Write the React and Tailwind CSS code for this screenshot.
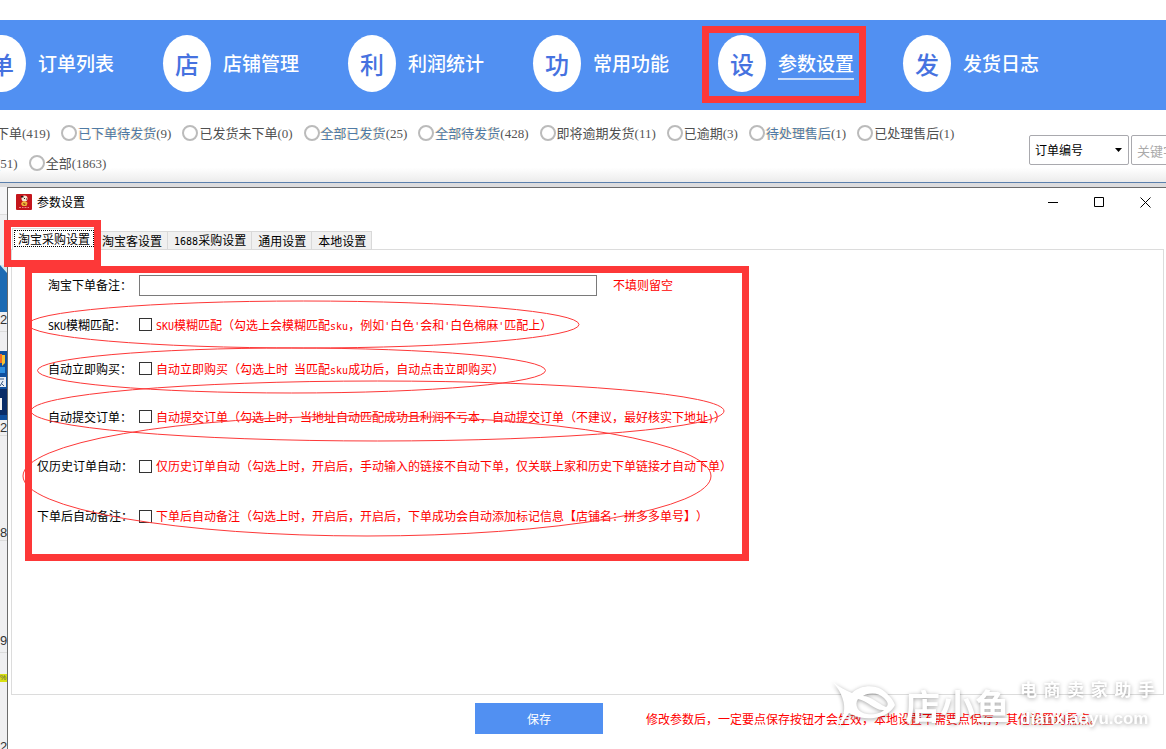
import { useState } from "react";

const NAV_ITEMS = [
  { key: "orders", badge: "单", label: "订单列表" },
  { key: "shops", badge: "店", label: "店铺管理" },
  { key: "profit", badge: "利", label: "利润统计" },
  { key: "tools", badge: "功", label: "常用功能" },
  { key: "settings", badge: "设", label: "参数设置" },
  { key: "logs", badge: "发", label: "发货日志" },
];

const FILTERS = [
  { label: "已下单待发货", count: 9, updated: true },
  { label: "已发货未下单", count: 0 },
  { label: "全部已发货", count: 25, updated: true },
  { label: "全部待发货", count: 428, updated: true },
  { label: "即将逾期发货", count: 11 },
  { label: "已逾期", count: 3 },
  { label: "待处理售后", count: 1, updated: true },
  { label: "已处理售后", count: 1 },
];

const TABS = [
  { key: "taobao", label: "淘宝采购设置" },
  { key: "taoke", label: "淘宝客设置" },
  { key: "1688", prefix: "1688", label: "采购设置" },
  { key: "common", label: "通用设置" },
  { key: "local", label: "本地设置" },
];

// latin letters take half the width of a Chinese character
const Half = ({ children }) => (
  <span className="font-['DejaVu_Sans_Mono',monospace] text-[10px]">{children}</span>
);

const OPTIONS = [
  {
    id: "sku",
    row: "mt-5",
    name: "pl-4",
    label: <><Half>SKU</Half>模糊匹配：</>,
    text: (
      <>
        <Half>SKU</Half>模糊匹配（勾选上会模糊匹配<Half>sku</Half>，例如<Half>'</Half>白色<Half>'</Half>会和
        <Half>'</Half>白色棉麻<Half>'</Half>匹配上）
      </>
    ),
  },
  {
    id: "buy",
    row: "mt-6",
    name: "pl-4",
    label: "自动立即购买：",
    text: <>自动立即购买（勾选上时<Half> </Half>当匹配<Half>sku</Half>成功后，自动点击立即购买）</>,
  },
  {
    id: "submit",
    row: "mt-7",
    name: "pl-4",
    label: "自动提交订单：",
    text: <>自动提交订单（勾选上时，当地址自动匹配成功且利润不亏本，自动提交订单（不建议，最好核实下地址<Half>)</Half>）</>,
  },
  {
    id: "history",
    row: "mt-[29px]",
    name: "pl-[5px]",
    label: "仅历史订单自动：",
    text: "仅历史订单自动（勾选上时，开启后，手动输入的链接不自动下单，仅关联上家和历史下单链接才自动下单）",
  },
  {
    id: "remark",
    row: "mt-[30px]",
    name: "pl-[5px]",
    label: "下单后自动备注：",
    text: "下单后自动备注（勾选上时，开启后，开启后，下单成功会自动添加标记信息【店铺名：拼多多单号】）",
  },
];

function NavBar({ active, onSelect }) {
  return (
    <nav className="h-[90px] bg-[#5190f2] overflow-hidden">
      <div className="flex items-center h-full -ml-[22px] pb-[3px]">
        {NAV_ITEMS.map((item) => (
          <button
            key={item.key}
            type="button"
            onClick={() => onSelect(item.key)}
            className="relative flex items-center gap-3 w-[185px] shrink-0 cursor-pointer"
          >
            <span className="w-12 h-[57px] rounded-[50%] bg-white text-[#4672e0] text-2xl font-medium flex items-center justify-center">
              {item.badge}
            </span>
            <span
              className={
                item.key === active
                  ? "text-white text-[19px] leading-[30px] font-medium border-b-2 border-[#c8dcfb]"
                  : "text-white text-[19px] leading-[30px] font-medium border-b-2 border-transparent"
              }
            >
              {item.label}
            </span>
            {item.key === "settings" && (
              <span className="absolute -left-[16px] -top-[9px] w-[164px] h-[77px] border-[7px] border-[#fd3838]" />
            )}
          </button>
        ))}
      </div>
    </nav>
  );
}

function Count({ value }) {
  return <span className="font-['Liberation_Serif',serif] text-[13px] text-[#555]">({value})</span>;
}

function FilterRadio({ label, count, updated }) {
  return (
    <label className="flex items-center gap-px whitespace-nowrap">
      <input type="radio" name="status" className="appearance-none w-4 h-4 rounded-full border-2 border-[#bbb] bg-white checked:bg-[#5190f2]" />
      <span>
        <span className={updated ? "text-[#4f7ba5] [text-shadow:-1px_0_#fbdcb0]" : "text-[#505050]"}>{label}</span>
        <Count value={count} />
      </span>
    </label>
  );
}

function FilterBar() {
  return (
    <div className="flex items-start h-[72px] text-[13px] text-[#505050] bg-linear-to-b from-white from-80% to-[#ececec]">
      <div className="flex-1 min-w-0 pt-2">
        <div className="flex items-center gap-[11px] h-[30px]">
          <span className="whitespace-nowrap -ml-1">下单<Count value={419} /></span>
          {FILTERS.map((f) => (
            <FilterRadio key={f.label} {...f} />
          ))}
        </div>
        <div className="flex items-center gap-[11px] h-[30px]">
          <span className="-ml-1"><Count value={51} /></span>
          <FilterRadio label="全部" count={1863} />
        </div>
      </div>
      <div className="flex gap-[2px] pt-[25px] -mr-[85px]">
        <div className="relative">
          <select
            aria-label="搜索字段"
            className="appearance-none w-[100px] h-[30px] pl-[5px] border border-[#a9a9ae] rounded-xs bg-white text-xs text-black"
          >
            <option>订单编号</option>
          </select>
          <svg className="absolute right-[7px] top-[13px] w-[7px] h-1 pointer-events-none" viewBox="0 0 7 4">
            <path d="M0 0h7L3.5 4z" fill="#000" />
          </svg>
        </div>
        <input
          aria-label="关键字"
          placeholder="关键字"
          className="w-[120px] h-[30px] px-[5px] border border-[#a9a9ae] rounded-xs bg-white placeholder:text-[#aaa]"
        />
      </div>
    </div>
  );
}

// sliver of the order list that stays visible next to the dialog
function OrderListEdge() {
  return (
    <div className="w-[7px] shrink-0 overflow-hidden bg-[#efeff1] text-[13px] leading-4 text-[#333] font-['Liberation_Sans',sans-serif]">
      <div className="h-7 bg-[#f5f5f7] border-b border-[#ddd]" />
      <svg className="block mt-[50px] w-[7px] h-[47px]" viewBox="0 0 7 47">
        <rect width="7" height="47" fill="#1d6bb3" />
        <path d="M0 0h7v8z" fill="#d3e8ee" />
      </svg>
      <div className="h-5 border-b border-[#dcdcdc]">2</div>
      <svg className="block mt-[19px] w-[7px] h-[69px]" viewBox="0 0 7 69">
        <rect width="7" height="69" fill="#0f4f9e" />
        <rect y="3" width="2" height="9" fill="#f26a2a" />
        <path d="M2 4h3v8l-3 3z" fill="#f5c232" />
        <rect y="16" width="5" height="6" fill="#2f8fe0" />
        <rect y="26" width="6" height="10" fill="#e8eef6" />
        <path d="M0 28h4M1 32l3 3M0 35l3-5" stroke="#3d5a86" />
        <rect y="38" width="7" height="26" fill="#0a2d68" />
        <rect y="47" width="2" height="12" fill="#f5f5f5" />
      </svg>
      <div className="h-4 border-b border-[#dcdcdc]">2</div>
      <div className="mt-[89px] h-4 border-b border-[#dcdcdc]">8</div>
      <div className="mt-[92px] h-5 border-b border-[#dcdcdc]">9</div>
      <div className="mt-[21px] h-2 bg-[#d9e010] text-[7px] leading-2 text-[#555]">%</div>
      <div className="mt-[57px] h-[10px]">2</div>
    </div>
  );
}

function AppIcon() {
  return (
    <svg className="w-4 h-4" viewBox="0 0 16 16">
      <rect width="16" height="16" rx="1" fill="#c4161c" />
      <circle cx="8.5" cy="4.5" r="3" fill="#f6e9d8" />
      <path d="M5 3.5h2.5V2H5zM8 4h1v1H8zM10 4.5h1v1h-1z" fill="#2a1512" />
      <path d="M6 8c1-1 5-1 5.500 1l-1 3H6.500L5 10z" fill="#f0b53a" />
      <path d="M7 9l3 1-2 1z" fill="#7a2c10" />
      <path d="M3 13.500h2M6 13.500h1.500M8.500 13.500h2M11.500 13.500h1.500" stroke="#e88" />
    </svg>
  );
}

function TitleBar() {
  return (
    <div className="flex items-center h-7 pl-2 -mr-0.5 text-black">
      <AppIcon />
      <h1 className="flex-1 pl-[5px] text-xs">参数设置</h1>
      <button type="button" aria-label="最小化" className="w-[46px] h-7 flex items-center justify-center">
        <svg width="11" height="11" viewBox="0 0 11 11"><path d="M0 5.500h10" stroke="#000" /></svg>
      </button>
      <button type="button" aria-label="最大化" className="w-[46px] h-7 flex items-center justify-center">
        <svg width="11" height="11" viewBox="0 0 11 11"><path d="M.5.5h9v9h-9z" fill="none" stroke="#000" /></svg>
      </button>
      <button type="button" aria-label="关闭" className="w-[46px] h-7 flex items-center justify-center">
        <svg width="11" height="11" viewBox="0 0 11 11"><path d="M.5.5l10 10M10.500.5l-10 10" stroke="#000" /></svg>
      </button>
    </div>
  );
}

function TabList({ tab, onChange }) {
  return (
    <div role="tablist" className="relative z-10 flex items-end h-[22px] ml-px text-xs leading-4">
      {TABS.map((t) =>
        t.key === tab ? (
          <button
            key={t.key}
            type="button"
            role="tab"
            aria-selected="true"
            className="h-[22px] pl-px pr-[2px] pb-[2px] bg-white border-t border-l border-[#dcdcdc]"
          >
            <span className="block px-[3px] h-[17px] border border-dotted border-black">{t.label}</span>
          </button>
        ) : (
          <button
            key={t.key}
            type="button"
            role="tab"
            aria-selected="false"
            onClick={() => onChange(t.key)}
            className="h-[19px] pl-[6px] pr-[5px] bg-[#f0f0f0] border border-l-0 border-[#d9d9d9]"
          >
            {t.prefix && <Half>{t.prefix}</Half>}
            {t.label}
          </button>
        )
      )}
      <span className="absolute -left-2 -top-2 w-[97px] h-[47px] border-[7px] border-[#fd3838] pointer-events-none" />
    </div>
  );
}

function SettingsForm() {
  return (
    <form className="relative w-[724px] ml-[13px] mt-4 border-[7px] border-[#fd3838] pt-[2px] pb-7 text-xs whitespace-nowrap">
      <div className="flex items-center h-5">
        <label htmlFor="note" className="w-[107px] pl-4">淘宝下单备注：</label>
        <input id="note" className="w-[458px] h-[21px] px-1 border border-[#7a7a7a] bg-white" />
        <span className="pl-4 text-[#f00]">不填则留空</span>
      </div>
      {OPTIONS.map((o) => (
        <div key={o.id} className={`flex items-center h-5 ${o.row}`}>
          <label htmlFor={o.id} className={`w-[107px] shrink-0 ${o.name}`}>{o.label}</label>
          <label className="flex items-center gap-1 text-[#f00]">
            <input id={o.id} type="checkbox" className="appearance-none shrink-0 w-[13px] h-[13px] border border-[#333] bg-white checked:bg-[#5190f2]" />
            <span>{o.text}</span>
          </label>
        </div>
      ))}
      {/* hand-drawn rings around the options */}
      <svg
        className="absolute left-0 top-0 w-[710px] h-[281px] overflow-visible pointer-events-none"
        viewBox="32 273 710 281"
        fill="none"
        stroke="#fd3838"
      >
        <ellipse cx="303.500" cy="324.500" rx="275.500" ry="23.500" />
        <ellipse cx="291.500" cy="370.500" rx="254" ry="22.500" />
        <ellipse cx="377.500" cy="411" rx="346.500" ry="30" />
        <ellipse cx="367" cy="476" rx="344" ry="60" />
      </svg>
    </form>
  );
}

function Watermark() {
  return (
    <div className="absolute right-[11px] bottom-4 flex items-center text-white pointer-events-none whitespace-nowrap drop-shadow-[0_1px_2px_rgba(0,0,0,0.35)]">
      <svg className="w-[64px] h-[46px] mr-2" viewBox="0 0 64 46">
        <path
          fill="#fff"
          fillRule="evenodd"
          d="M0 0C6 5 12 8 19 11C28 3 40 3 48 7C54 11 60 17 62 23C59 29 53 33 46 35C38 37 28 37 20 33L16 31C13 35 10 40 6 45C8 38 10 33 11 29C12 22 10 12 0 0zM25 17C21 23 25 31 34 32C42 33 48 31 51 28C42 29 35 19 25 17zM30 14C38 14 44 21 53 25C56 23 55 20 51 16C45 10 36 10 30 14z"
        />
      </svg>
      <span className="text-[35px] leading-[48px] font-bold">店小鱼</span>
      <span className="flex flex-col pl-[10px]">
        <span className="flex justify-between w-[135px] text-[17px] leading-6 font-bold">
          {[..."电商卖家助手"].map((c) => (
            <span key={c}>{c}</span>
          ))}
        </span>
        <span className="mt-1 text-[17px] leading-7 font-['Liberation_Sans',sans-serif] font-bold">dianxiaoyu.com</span>
      </span>
    </div>
  );
}

export default function App() {
  const [active, setActive] = useState("settings");
  const [tab, setTab] = useState("taobao");

  return (
    <div className="relative min-h-screen flex flex-col pt-5 bg-white overflow-hidden text-black font-['Noto_Sans_CJK_SC',sans-serif] [text-spacing-trim:space-all]">
      <NavBar active={active} onSelect={setActive} />
      <FilterBar />
      <div className="flex-1 flex flex-col border-t border-[#5b80ad] bg-[#dcdcde] pt-1">
        <div className="flex-1 flex">
          <OrderListEdge />
          <section className="flex-1 min-w-0 flex flex-col bg-white border-t border-l border-[#6b6b6b]">
            <TitleBar />
            <div className="flex-1 flex flex-col pt-3 pl-[3px] pr-[2px]">
              <TabList tab={tab} onChange={setTab} />
              <div role="tabpanel" className="flex-1 -mt-px border border-[#dcdcdc]">
                <SettingsForm />
              </div>
            </div>
            <div className="flex items-start h-[54px] pt-2 pl-[467px] text-xs leading-[31px] whitespace-nowrap">
              <button type="button" className="w-32 h-[31px] shrink-0 bg-[#5190f2] text-white cursor-pointer">保存</button>
              <p className="pl-[43px] text-[#f00]">
                修改参数后，一定要点保存按钮才会生效，本地设置不需要点保存，其他设置均需点。
              </p>
            </div>
          </section>
        </div>
      </div>
      <Watermark />
    </div>
  );
}
